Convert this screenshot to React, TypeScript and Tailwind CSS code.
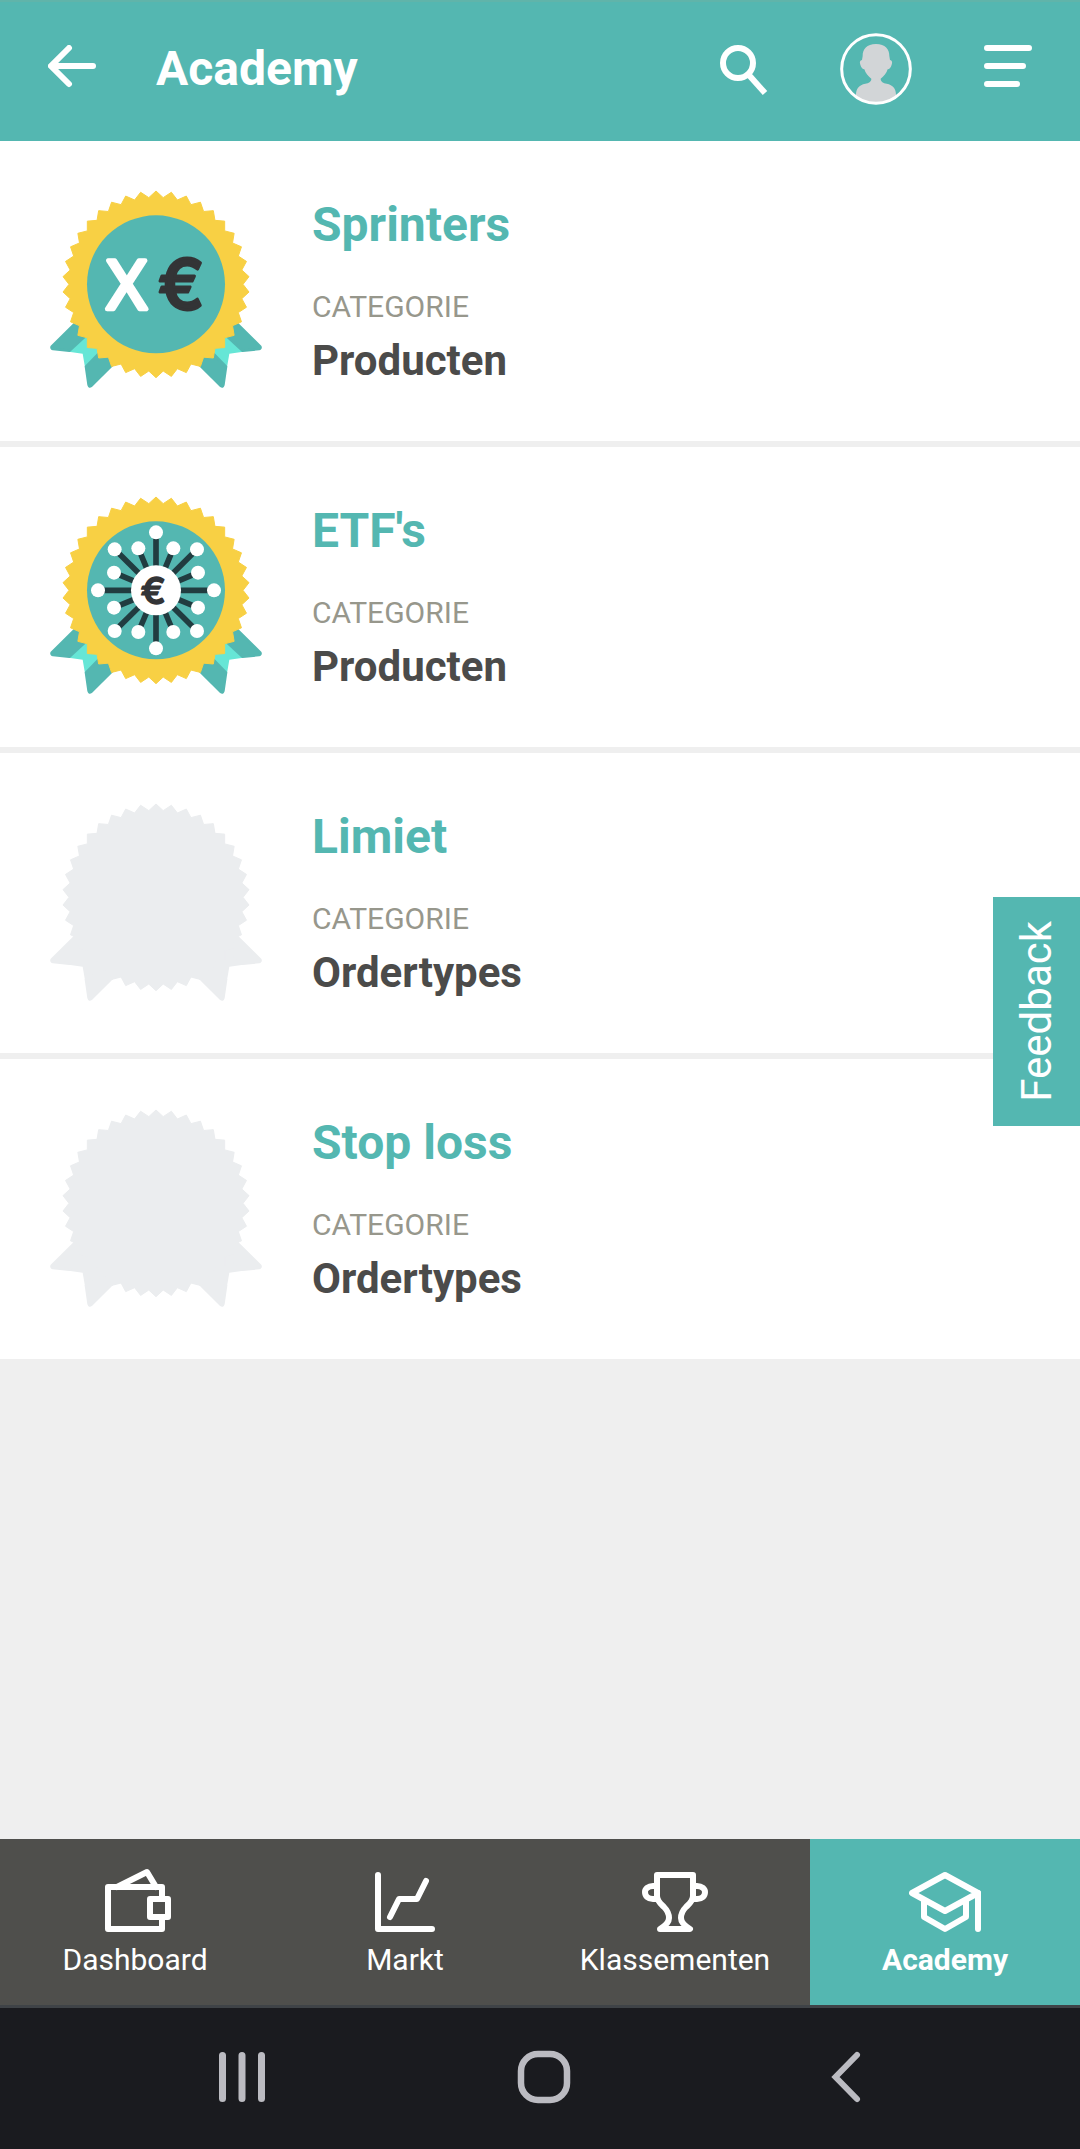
import type { ReactNode } from "react";

const CENTER_X = 378;
const CENTER_Y = 343;
const TEETH = 38;

const sealPoints = Array.from({ length: TEETH * 2 }, (_, i) => {
  const radius = i % 2 === 0 ? 280 : 261;
  const angle = (i * Math.PI) / TEETH;
  const x = CENTER_X + radius * Math.sin(angle);
  const y = CENTER_Y - radius * Math.cos(angle);
  return `${x.toFixed(1)},${y.toFixed(1)}`;
}).join(" ");

const spokes: [number, number][] = [
  [378, 169], [430, 217], [501, 220], [504, 290],
  [552, 343], [504, 395], [501, 465], [430, 468],
  [378, 517], [325, 468], [254, 465], [252, 395],
  [204, 343], [252, 290], [254, 220], [325, 217],
];

function Ribbon({ main, fold }: { main: string; fold: string }) {
  return (
    <g strokeLinejoin="round">
      <path d="M163 480L116 545L158 551L165 592L206 560L300 520Z" fill={fold} />
      <path d="M134 462L65 530Q63 535 69 537L118 542L166 498L190 430Z" fill={main} stroke={main} strokeWidth="8" />
      <path d="M168 590L176 645Q178 652 183 648L260 572L300 500L209 548Z" fill={main} stroke={main} strokeWidth="8" />
    </g>
  );
}

function Badge({ earned, children }: { earned: boolean; children?: ReactNode }) {
  const main = earned ? "#54b7b1" : "#ebedef";
  const fold = earned ? "#66e6d6" : "#ebedef";
  const seal = earned ? "#f8d044" : "#ebedef";
  return (
    <svg viewBox="54 57 648 612" className="h-[204px] w-[216px] shrink-0" aria-hidden="true">
      <g transform={earned ? undefined : "translate(0 3)"}>
        <Ribbon main={main} fold={fold} />
        <g transform="translate(756 0) scale(-1 1)">
          <Ribbon main={main} fold={fold} />
        </g>
        <polygon points={sealPoints} fill={seal} stroke={seal} strokeWidth="3" strokeLinejoin="round" />
        {earned && <circle cx={CENTER_X} cy={CENTER_Y} r="207" fill="#54b7b1" />}
        {children}
      </g>
    </svg>
  );
}

function SprintersArt() {
  return (
    <g textAnchor="middle" strokeLinejoin="round">
      <text x="290" y="416" fontFamily="'Open Sans', sans-serif" fontWeight="500" fontSize="205" fill="#ffffff" stroke="#ffffff" strokeWidth="14">X</text>
      <text x="454" y="418" fontFamily="Inter, sans-serif" fontWeight="500" fontSize="206" fill="#333436" stroke="#333436" strokeWidth="9">€</text>
    </g>
  );
}

function EtfArt() {
  return (
    <g>
      {spokes.map(([x, y]) => (
        <line key={`l${x}-${y}`} x1={CENTER_X} y1={CENTER_Y} x2={x} y2={y} stroke="#213c40" strokeWidth="17" />
      ))}
      {spokes.map(([x, y]) => (
        <circle key={`c${x}-${y}`} cx={x} cy={y} r="21" fill="#ffffff" />
      ))}
      <circle cx={CENTER_X} cy={CENTER_Y} r="75" fill="#ffffff" />
      <text x="370" y="384" fontFamily="Inter, sans-serif" fontWeight="500" fontSize="112" textAnchor="middle" fill="#333436" stroke="#333436" strokeWidth="5" strokeLinejoin="round">€</text>
    </g>
  );
}

const courses = [
  { title: "Sprinters", category: "Producten", earned: true, art: <SprintersArt /> },
  { title: "ETF's", category: "Producten", earned: true, art: <EtfArt /> },
  { title: "Limiet", category: "Ordertypes", earned: false, art: null },
  { title: "Stop loss", category: "Ordertypes", earned: false, art: null },
];

const tabs = [
  {
    label: "Dashboard",
    icon: (
      <>
        <path d="M63 36V24H9V66H63V54" />
        <path d="M51 36H69V54H51Z" />
        <path d="M18 24L48 9L57 24" />
      </>
    ),
  },
  {
    label: "Markt",
    icon: (
      <>
        <path d="M9 12V66H63" />
        <path d="M21 54L30 36H48L57 18" />
      </>
    ),
  },
  {
    label: "Klassementen",
    icon: (
      <>
        <path d="M18 12H54V33C54 38 50 41 47 44C44 47 42 51 42 55C42 60 46 63 51 66H21C26 63 30 60 30 55C30 51 28 47 25 44C22 41 18 38 18 33Z" />
        <path d="M18 23H14C9 23 6 26 6 29C6 33 9 36 14 36H18" />
        <path d="M54 23H58C63 23 66 26 66 29C66 33 63 36 58 36H54" />
      </>
    ),
  },
  {
    label: "Academy",
    icon: (
      <>
        <path d="M36 12L69 30L36 48L3 30Z" />
        <path d="M15 38V54L36 66L57 54V38" />
        <path d="M69 30V66" />
      </>
    ),
  },
];

function Header() {
  return (
    <header className="flex h-[141px] items-center border-t-2 border-[#60b4aa] bg-[#54b7b1] px-12 pb-[5px] text-white">
      <button type="button" aria-label="Terug">
        <svg viewBox="0 0 48 48" className="size-12" fill="none" stroke="currentColor" strokeWidth="6" strokeLinecap="round">
          <path d="M21 3L3 21L21 39" strokeLinejoin="miter" />
          <path d="M4 21H45" />
        </svg>
      </button>
      <h1 className="ml-[60px] flex-1 text-5xl leading-[56px] font-bold">Academy</h1>
      <div className="flex items-center gap-[72px]">
        <button type="button" aria-label="Zoeken">
          <svg viewBox="0 0 48 48" className="size-12 overflow-visible" fill="none" stroke="currentColor">
            <circle cx="18" cy="18" r="15" strokeWidth="6" />
            <path d="M28 29L45 48" strokeWidth="6" />
          </svg>
        </button>
        <button type="button" aria-label="Profiel">
          <svg viewBox="480 99 216 216" className="size-[72px]">
            <path
              d="M588 132C560 132 548 147 548 168L546 180C540 181 538 186 541 194C544 203 547 207 553 208C556 220 565 229 574 236C574 246 566 249 556 251C537 255 528 266 528 285V290C546 304 568 310 588 310C608 310 630 304 648 290V285C648 266 639 255 620 251C610 249 602 246 602 236C611 229 620 220 623 208C629 207 632 203 635 194C638 186 636 181 630 180L628 168C628 147 616 132 588 132Z"
              fill="#d2d5d7"
            />
            <circle cx="588" cy="207" r="103" fill="none" stroke="currentColor" strokeWidth="9" />
          </svg>
        </button>
        <button type="button" aria-label="Menu">
          <svg viewBox="0 0 48 48" className="size-12" fill="none" stroke="currentColor" strokeWidth="6" strokeLinecap="round">
            <path d="M3 3H45M3 21H39M3 39H33" />
          </svg>
        </button>
      </div>
    </header>
  );
}

function CourseList() {
  return (
    <ul className="flex flex-col gap-1.5">
      {courses.map((course) => (
        <li key={course.title}>
          <a href="#" className="flex items-center gap-12 bg-white p-12">
            <Badge earned={course.earned}>{course.art}</Badge>
            <div>
              <h2 className="text-5xl leading-[56px] font-bold text-[#54b7b1]">{course.title}</h2>
              <p className="mt-9 text-3xl leading-9 text-[#97978c]">CATEGORIE</p>
              <p className="mt-3 text-[42px] leading-[48px] font-bold text-[#4b4b4a]">{course.category}</p>
            </div>
          </a>
        </li>
      ))}
    </ul>
  );
}

function TabBar() {
  return (
    <nav className="grid grid-cols-4 border-b-[3px] border-[#3f4347] bg-[#4f4f4c] text-white">
      {tabs.map((tab) => {
        const active = tab.label === "Academy";
        return (
          <a
            key={tab.label}
            href="#"
            aria-current={active ? "page" : undefined}
            className={`flex flex-col items-center gap-[7px] pt-6 pb-[27px] ${active ? "bg-[#54b7b1] font-bold" : ""}`}
          >
            <svg viewBox="0 0 72 72" className="size-[72px]" fill="none" stroke="currentColor" strokeWidth="6" strokeLinecap="round" strokeLinejoin="round" aria-hidden="true">
              {tab.icon}
            </svg>
            <span className="text-3xl leading-9">{tab.label}</span>
          </a>
        );
      })}
    </nav>
  );
}

function SystemBar() {
  return (
    <div className="grid h-[141px] grid-cols-3 place-items-center bg-[#1a1b1f] pr-[83px] pb-[3px] pl-[91px] text-[#bbbbc1]">
      <button type="button" aria-label="Recente apps">
        <svg viewBox="0 0 54 54" className="size-[54px]" fill="none" stroke="currentColor" strokeWidth="7" strokeLinecap="round">
          <path d="M7.500 5.500V48.500M27 5.500V48.500M46.500 5.500V48.500" />
        </svg>
      </button>
      <button type="button" aria-label="Startscherm">
        <svg viewBox="0 0 54 54" className="size-[54px]" fill="none" stroke="currentColor" strokeWidth="6.500">
          <rect x="4" y="4" width="46" height="46" rx="17" />
        </svg>
      </button>
      <button type="button" aria-label="Vorige">
        <svg viewBox="0 0 54 54" className="size-[54px]" fill="none" stroke="currentColor" strokeWidth="6" strokeLinecap="round">
          <path d="M38 5L16.500 27L38 49" />
        </svg>
      </button>
    </div>
  );
}

export default function App() {
  return (
    <div className="flex min-h-screen flex-col bg-[#efefef] font-[Roboto,sans-serif]">
      <Header />
      <main className="flex-1">
        <CourseList />
      </main>
      <TabBar />
      <SystemBar />
      <button
        type="button"
        className="fixed top-[897px] right-0 flex h-[229px] w-[87px] items-center justify-center bg-[#54b7b1] text-[42px] leading-[48px] text-white"
      >
        <span className="rotate-180 [writing-mode:vertical-rl]">Feedback</span>
      </button>
    </div>
  );
}
